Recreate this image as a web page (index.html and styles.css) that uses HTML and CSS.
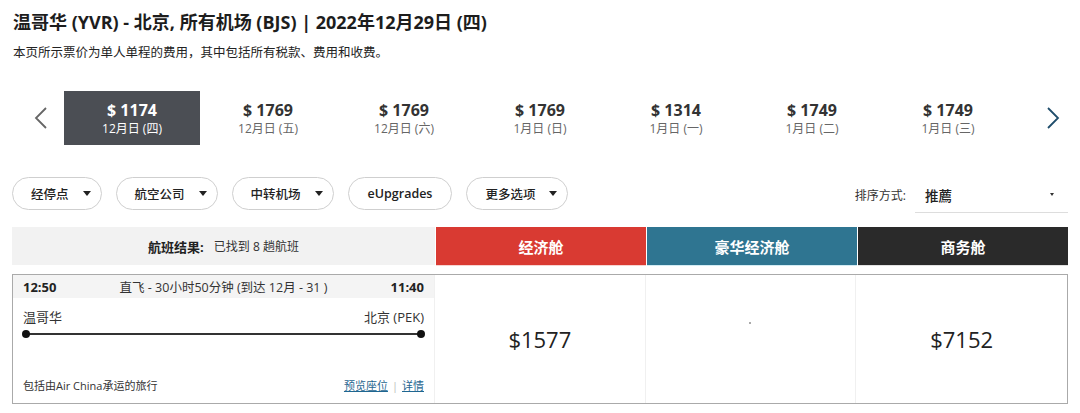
FILE: index.html
```html
<!DOCTYPE html>
<html lang="zh-CN">
  <head>
    <meta charset="UTF-8" />
    <title>航班搜索结果</title>
    <link rel="stylesheet" href="styles.css">
  </head>
  <body>
    <div class="page">
      <h1 class="title">温哥华 (YVR) - 北京, 所有机场 (BJS) | 2022年12月29日 (四)</h1>
      <p class="note">本页所示票价为单人单程的费用，其中包括所有税款、费用和收费。</p>

      <div class="dates">
        <button class="nav prev" aria-label="上一周">
          <svg width="14" height="24" viewBox="0 0 14 24"><polyline points="12,2 2,12 12,22" /></svg>
        </button>
        <div class="day active"><b>$ 1174</b><span>12月日 (四)</span></div>
        <div class="day"><b>$ 1769</b><span>12月日 (五)</span></div>
        <div class="day"><b>$ 1769</b><span>12月日 (六)</span></div>
        <div class="day"><b>$ 1769</b><span>1月日 (日)</span></div>
        <div class="day"><b>$ 1314</b><span>1月日 (一)</span></div>
        <div class="day"><b>$ 1749</b><span>1月日 (二)</span></div>
        <div class="day"><b>$ 1749</b><span>1月日 (三)</span></div>
        <button class="nav next" aria-label="下一周">
          <svg width="14" height="24" viewBox="0 0 14 24"><polyline points="2,2 12,12 2,22" /></svg>
        </button>
      </div>

      <div class="toolbar">
        <div class="filters">
          <button class="pill">经停点<i class="caret"></i></button>
          <button class="pill">航空公司<i class="caret"></i></button>
          <button class="pill">中转机场<i class="caret"></i></button>
          <button class="pill plain">eUpgrades</button>
          <button class="pill">更多选项<i class="caret"></i></button>
        </div>
        <div class="sort">
          <span class="sort-label">排序方式:</span>
          <div class="select">推薦<i class="caret small"></i></div>
        </div>
      </div>

      <div class="cabins">
        <div class="summary"><b>航班结果:</b> 已找到 8 趟航班</div>
        <div class="cabin economy">经济舱</div>
        <div class="cabin premium">豪华经济舱</div>
        <div class="cabin business">商务舱</div>
      </div>

      <div class="flight">
        <div class="route">
          <div class="route-head">
            <b>12:50</b>
            <span>直飞 - 30小时50分钟 (到达 12月 - 31 )</span>
            <b>11:40</b>
          </div>
          <div class="cities">
            <span>温哥华</span>
            <span>北京 (PEK)</span>
          </div>
          <div class="track"></div>
          <div class="route-foot">
            <span>包括由Air China承运的旅行</span>
            <span class="links"><a href="#">预览座位</a><i class="sep">|</i><a href="#">详情</a></span>
          </div>
        </div>
        <div class="fare">$1577</div>
        <div class="fare empty"><i class="dot"></i></div>
        <div class="fare">$7152</div>
      </div>
    </div>
  </body>
</html>
```

FILE: styles.css
```css
body {
  margin: 0;
  font-family: "Open Sans", "Noto Sans CJK SC", sans-serif;
  color: #222;
  background: #fff;
}
.page {
  padding: 10px 12px 0 12px;
}
.title {
  margin: 0 0 0 1px;
  font-size: 18px;
  line-height: 24px;
  font-weight: 700;
  color: #1d1d1d;
}
.note {
  margin: 10px 0 0 1px;
  font-size: 12.5px;
  line-height: 18px;
  color: #222;
}

/* date strip */
.dates {
  display: flex;
  align-items: stretch;
  height: 54px;
  margin-top: 29px;
}
.nav {
  border: 0;
  background: none;
  padding: 0;
  display: flex;
  align-items: center;
  justify-content: center;
  cursor: pointer;
}
.nav svg polyline {
  fill: none;
  stroke-width: 1.8;
}
.prev {
  width: 52px;
  padding-left: 6px;
}
.prev polyline {
  stroke: #666;
}
.next {
  width: 52px;
  padding-left: 22px;
}
.next polyline {
  stroke: #1f4d6b;
}
.day {
  width: 136px;
  display: flex;
  flex-direction: column;
  align-items: center;
  padding-top: 9px;
  box-sizing: border-box;
}
.day b {
  font-size: 16px;
  line-height: 20px;
  font-weight: 700;
  color: #333;
}
.day span {
  margin-top: 1px;
  font-size: 12px;
  line-height: 16px;
  color: #666;
}
.day.active {
  background: #4b4e54;
}
.day.active b,
.day.active span {
  color: #fff;
}

/* filters and sorting */
.toolbar {
  display: flex;
  justify-content: space-between;
  align-items: flex-start;
  margin-top: 32px;
}
.filters {
  display: flex;
  gap: 14px;
}
.pill {
  height: 33px;
  padding: 0 10px 0 18px;
  border: 1px solid #cfcfcf;
  border-radius: 17px;
  background: #fff;
  font-family: inherit;
  font-size: 12.5px;
  font-weight: 500;
  color: #222;
  display: flex;
  align-items: center;
  gap: 14px;
}
.pill.plain {
  padding: 0 19px;
  font-weight: 600;
}
.caret {
  width: 0;
  height: 0;
  border-left: 4px solid transparent;
  border-right: 4px solid transparent;
  border-top: 5px solid #222;
}
.caret.small {
  border-left-width: 2.5px;
  border-right-width: 2.5px;
  border-top-width: 3px;
  border-top-color: #333;
}
.sort {
  display: flex;
  align-items: center;
  height: 36px;
}
.sort-label {
  font-size: 12px;
  color: #333;
  margin-right: 9px;
}
.select {
  width: 153px;
  height: 36px;
  box-sizing: border-box;
  padding: 0 14px 0 10px;
  border-bottom: 1px solid #ddd;
  display: flex;
  align-items: center;
  justify-content: space-between;
  font-size: 13.5px;
  font-weight: 500;
  color: #222;
}

/* cabin headers */
.cabins {
  display: grid;
  grid-template-columns: 423px repeat(3, 1fr);
  gap: 1px;
  height: 38px;
  margin-top: 14px;
}
.summary {
  background: #f2f2f2;
  display: flex;
  align-items: center;
  justify-content: center;
  gap: 10px;
  font-size: 12px;
  color: #333;
}
.summary b {
  font-size: 13px;
  font-weight: 700;
  color: #222;
}
.cabin {
  display: flex;
  align-items: center;
  justify-content: center;
  font-size: 15px;
  font-weight: 700;
  color: #fff;
}
.economy {
  background: #d93a32;
  box-shadow: 0 1px 0 #f7d4d1;
}
.premium {
  background: #2f7591;
  box-shadow: 0 1px 0 #d3ecf4;
}
.business {
  background: #2a2a2a;
  box-shadow: 0 1px 0 #e2e2e2;
}

/* flight row */
.flight {
  display: grid;
  grid-template-columns: 422px repeat(3, 1fr);
  height: 130px;
  box-sizing: border-box;
  margin-top: 9px;
  border: 1px solid #aaa;
}
.route {
  display: flex;
  flex-direction: column;
  border-right: 1px solid #f0f0f0;
}
.route-head {
  height: 23px;
  background: #f4f4f4;
  padding: 0 10px;
  display: flex;
  justify-content: space-between;
  align-items: center;
  font-size: 12.5px;
  color: #333;
}
.route-head b {
  font-size: 13px;
  font-weight: 700;
  color: #222;
}
.cities {
  margin-top: 10px;
  padding: 0 10px;
  display: flex;
  justify-content: space-between;
  font-size: 13px;
  line-height: 18px;
  color: #333;
}
.track {
  position: relative;
  margin: 7px 13px 0 13px;
  height: 2px;
  background: #333;
}
.track::before,
.track::after {
  content: "";
  position: absolute;
  top: -3px;
  width: 8px;
  height: 8px;
  border-radius: 50%;
  background: #111;
}
.track::before {
  left: -4px;
}
.track::after {
  right: -4px;
}
.route-foot {
  margin-top: auto;
  margin-bottom: 9px;
  padding: 0 10px;
  display: flex;
  justify-content: space-between;
  font-size: 11px;
  line-height: 16px;
  color: #333;
}
.links a {
  color: #1f6690;
  text-decoration: underline;
}
.sep {
  font-style: normal;
  color: #bbb;
  margin: 0 4px;
}
.fare {
  display: flex;
  align-items: center;
  justify-content: center;
  font-size: 22px;
  color: #222;
  border-right: 1px solid #f0f0f0;
}
.fare:last-child {
  border-right: 0;
}
.fare.empty {
  align-items: flex-start;
}
.dot {
  width: 2px;
  height: 2px;
  margin-top: 47px;
  background: #aaa;
}
```
